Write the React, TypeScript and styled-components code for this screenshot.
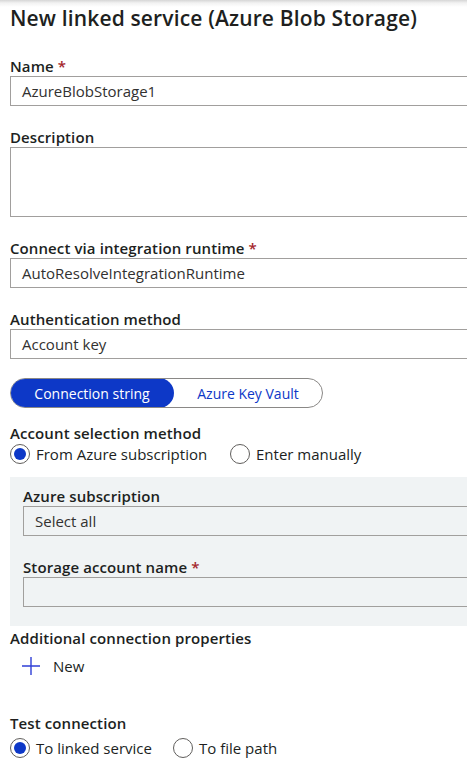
import React from "react";
import styled, { createGlobalStyle } from "styled-components";

const Global = createGlobalStyle`
  html, body { margin: 0; padding: 0; background: #fff; }
  body {
    font-family: "Open Sans", "Noto Sans", "DejaVu Sans", sans-serif;
    color: #323130;
    overflow: hidden;
  }
  * { box-sizing: border-box; }
`;

const BLUE = "#0d38c7";

const Page = styled.div`
  width: 467px;
  height: 766px;
  overflow: hidden;
  padding: 4px 0 0 10px;
  background: linear-gradient(to bottom, #d6d6d6 0px, #f2f2f2 3px, #ffffff 7px);
`;

const Title = styled.h1`
  margin: 0;
  font-size: 21px;
  line-height: 28px;
  font-weight: 600;
  letter-spacing: 0.15px;
  white-space: nowrap;
  color: #201f1e;
`;

const Field = styled.div<{ $gap?: number }>`
  margin-top: ${(p) => p.$gap ?? 21}px;
  display: flex;
  flex-direction: column;
`;

const Label = styled.div`
  font-size: 15px;
  line-height: 20px;
  font-weight: 600;
  letter-spacing: 0.1px;
  color: #201f1e;
  white-space: nowrap;
`;

const Star = styled.span`
  color: #a4262c;
  margin-left: 4px;
`;

const Input = styled.div<{ $h?: number }>`
  width: 480px;
  height: ${(p) => p.$h ?? 30}px;
  border: 1px solid #a19f9d;
  background: transparent;
  padding: 0 11px;
  display: flex;
  align-items: ${(p) => (p.$h && p.$h > 40 ? "flex-start" : "center")};
  font-size: 15px;
  color: #323130;
  white-space: nowrap;
`;

const Toggle = styled.div`
  margin-top: 19px;
  width: 313px;
  height: 30px;
  border: 1px solid #8a8886;
  border-radius: 15px;
  display: flex;
  overflow: hidden;
`;

const Segment = styled.div<{ $active?: boolean }>`
  width: ${(p) => (p.$active ? 164 : 148)}px;
  border-radius: 15px;
  display: flex;
  align-items: center;
  justify-content: center;
  font-size: 14px;
  background: ${(p) => (p.$active ? BLUE : "transparent")};
  color: ${(p) => (p.$active ? "#fff" : BLUE)};
  margin: ${(p) => (p.$active ? "-1px 0 -1px -1px" : "0")};
  height: ${(p) => (p.$active ? "30px" : "28px")};
`;

const RadioRow = styled.div<{ $gap: number }>`
  margin-top: ${(p) => p.$gap}px;
  display: flex;
  align-items: center;
  height: 20px;
`;

const RadioItem = styled.div<{ $w: number }>`
  width: ${(p) => p.$w}px;
  display: flex;
  align-items: center;
  gap: 6px;
  font-size: 15px;
  white-space: nowrap;
  color: #201f1e;
`;

const Circle = styled.span<{ $on?: boolean }>`
  width: 20px;
  height: 20px;
  border-radius: 50%;
  border: 1px solid #605e5c;
  display: flex;
  align-items: center;
  justify-content: center;
  flex: none;
  &::after {
    content: "";
    width: 12px;
    height: 12px;
    border-radius: 50%;
    background: ${(p) => (p.$on ? BLUE : "transparent")};
  }
`;

const Panel = styled.div`
  margin-top: 13px;
  width: 480px;
  background: #f0f3f4;
  padding: 9px 0 19px 13px;
  display: flex;
  flex-direction: column;
`;

const AddRow = styled.div`
  margin-top: 6px;
  height: 24px;
  padding-left: 11px;
  display: flex;
  align-items: center;
  gap: 12px;
  font-size: 15px;
  color: #201f1e;
`;

const Radio = ({ on, w, children }: { on?: boolean; w: number; children: React.ReactNode }) => (
  <RadioItem $w={w}>
    <Circle $on={on} />
    {children}
  </RadioItem>
);

export default function App() {
  return (
    <>
      <Global />
      <Page>
        <Title>New linked service (Azure Blob Storage)</Title>

        <Field $gap={24}>
          <Label>
            Name<Star>*</Star>
          </Label>
          <Input>AzureBlobStorage1</Input>
        </Field>

        <Field>
          <Label>Description</Label>
          <Input $h={70} />
        </Field>

        <Field>
          <Label>
            Connect via integration runtime<Star>*</Star>
          </Label>
          <Input>AutoResolveIntegrationRuntime</Input>
        </Field>

        <Field>
          <Label>Authentication method</Label>
          <Input>Account key</Input>
        </Field>

        <Toggle>
          <Segment $active>Connection string</Segment>
          <Segment>Azure Key Vault</Segment>
        </Toggle>

        <Field $gap={15}>
          <Label>Account selection method</Label>
          <RadioRow $gap={1}>
            <Radio on w={220}>From Azure subscription</Radio>
            <Radio w={140}>Enter manually</Radio>
          </RadioRow>
        </Field>

        <Panel>
          <Label>Azure subscription</Label>
          <Input>Select all</Input>
          <Field>
            <Label>
              Storage account name<Star>*</Star>
            </Label>
            <Input />
          </Field>
        </Panel>

        <Field $gap={2}>
          <Label>Additional connection properties</Label>
          <AddRow>
            <svg width="20" height="20" viewBox="0 0 20 20">
              <path d="M10 1v18M1 10h18" stroke="#2f3fd6" strokeWidth="1.4" fill="none" />
            </svg>
            New
          </AddRow>
        </Field>

        <Field $gap={35}>
          <Label>Test connection</Label>
          <RadioRow $gap={5}>
            <Radio on w={163}>To linked service</Radio>
            <Radio w={120}>To file path</Radio>
          </RadioRow>
        </Field>
      </Page>
    </>
  );
}
